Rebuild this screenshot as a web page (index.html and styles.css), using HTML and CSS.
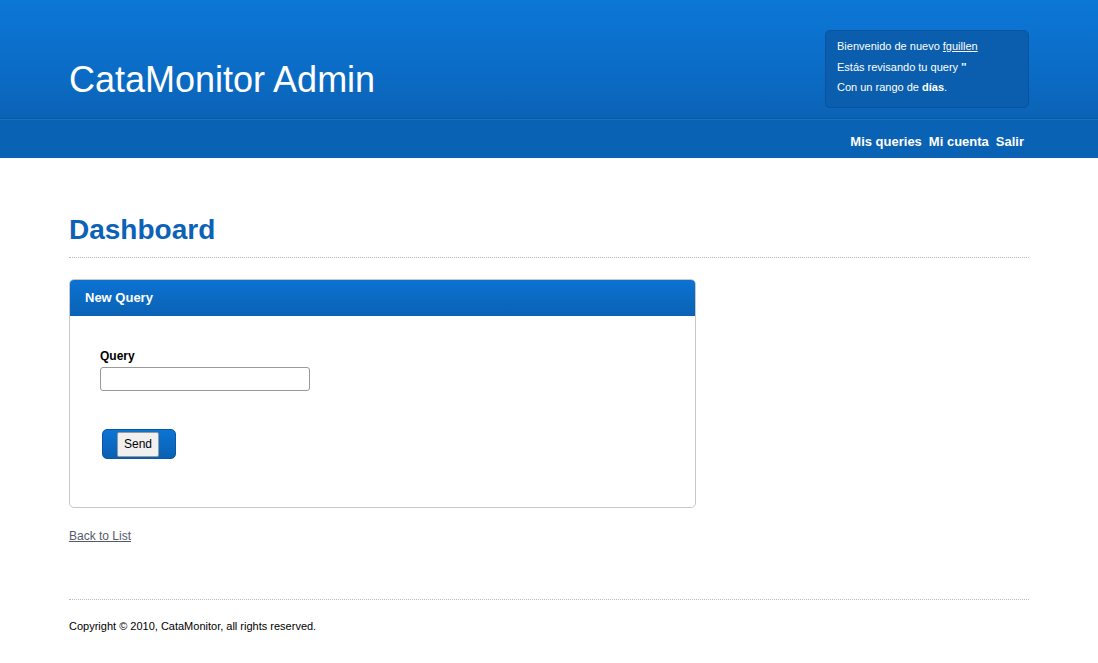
FILE: index.html
```html
<!DOCTYPE html>
<html lang="es">
<head>
<meta charset="utf-8">
<title>CataMonitor Admin</title>
<link rel="stylesheet" href="styles.css">
</head>
<body>
<div class="header">
  <div class="header-top">
    <div class="wrap header-inner">
      <h1 class="logo">CataMonitor Admin</h1>
      <div class="userbox">
        <p>Bienvenido de nuevo <a href="#">fguillen</a></p>
        <p>Estás revisando tu query <b>''</b></p>
        <p>Con un rango de <b>días</b>.</p>
      </div>
    </div>
  </div>
  <div class="nav">
    <div class="wrap nav-inner">
      <a href="#">Mis queries</a>
      <a href="#">Mi cuenta</a>
      <a href="#">Salir</a>
    </div>
  </div>
</div>

<div class="wrap main">
  <h2 class="page-title">Dashboard</h2>
  <div class="panel">
    <div class="panel-head">New Query</div>
    <div class="panel-body">
      <label class="field-label" for="q">Query</label>
      <input class="field-input" id="q" type="text">
      <div class="actions">
        <span class="btn-wrap"><button class="btn" type="button">Send</button></span>
      </div>
    </div>
  </div>
  <a class="back" href="#">Back to List</a>
  <div class="footer">Copyright © 2010, CataMonitor, all rights reserved.</div>
</div>
</body>
</html>
```
FILE: styles.css
```css
html, body {
  margin: 0;
  padding: 0;
  background: #fff;
  font-family: "Liberation Sans", Arial, Helvetica, sans-serif;
  color: #000;
}
.wrap {
  width: 960px;
  margin: 0 auto;
}
.header-top {
  height: 118px;
  background: linear-gradient(to bottom, #0c77d6 0%, #0b6cc6 60%, #0b63b5 100%);
  border-bottom: 1px solid #0a57a3;
  box-shadow: 0 1px 0 #1a72c4;
}
.header-inner {
  display: flex;
  justify-content: space-between;
  align-items: flex-start;
}
.logo {
  margin: 59px 0 0 0;
  font-size: 36px;
  font-weight: normal;
  color: #fff;
  line-height: 42px;
}
.userbox {
  margin-top: 30px;
  width: 180px;
  height: 61px;
  padding: 5px 11px 10px 11px;
  background: #0a5ead;
  border: 1px solid #0953a0;
  border-radius: 5px;
  color: #fff;
  font-size: 11px;
}
.userbox p {
  margin: 0;
  line-height: 20.5px;
}
.userbox a {
  color: #fff;
}
.nav {
  height: 38px;
  background: #0a62b4;
  margin-top: 1px;
}
.nav-inner {
  display: flex;
  justify-content: flex-end;
  align-items: center;
  height: 38px;
  gap: 7px;
  box-sizing: border-box;
  padding-right: 5px;
  padding-top: 4px;
}
.nav a {
  color: #fff;
  font-weight: bold;
  font-size: 13px;
  text-decoration: none;
}
.main {
  padding-top: 55px;
}
.page-title {
  margin: 0;
  font-size: 28px;
  font-weight: bold;
  color: #0b62b6;
  line-height: 34px;
  padding-bottom: 10px;
  border-bottom: 1px dotted #bbb;
}
.panel {
  margin-top: 21px;
  width: 625px;
  border: 1px solid #c8c8c8;
  border-radius: 5px;
  overflow: hidden;
}
.panel-head {
  height: 36px;
  line-height: 36px;
  padding-left: 15px;
  background: linear-gradient(to bottom, #0c72d2 0%, #0a62b4 100%);
  color: #fff;
  font-weight: bold;
  font-size: 13px;
}
.panel-body {
  padding: 32px 30px 48px 30px;
}
.field-label {
  display: block;
  font-weight: bold;
  font-size: 12px;
  line-height: 16px;
}
.field-input {
  display: block;
  margin-top: 3px;
  width: 210px;
  height: 24px;
  box-sizing: border-box;
  border: 1px solid #999;
  border-radius: 3px;
  padding: 2px 4px;
  font-size: 12px;
}
.actions {
  margin-top: 38px;
  padding-left: 2px;
}
.btn-wrap {
  display: inline-flex;
  align-items: center;
  height: 30px;
  box-sizing: border-box;
  padding: 0 16px 0 14px;
  background: linear-gradient(to bottom, #0c74d4 0%, #0a60b2 100%);
  border: 1px solid #0957a6;
  border-radius: 5px;
}
.btn {
  height: 25px;
  padding: 0 6px;
  background: #f0f0f0;
  border: 1px solid #999;
  border-radius: 2px;
  font-family: "Liberation Sans", Arial, sans-serif;
  font-size: 12px;
  color: #000;
}
.back {
  display: inline-block;
  margin-top: 21px;
  font-size: 12px;
  color: #555a6a;
}
.footer {
  margin-top: 55px;
  border-top: 1px dotted #bbb;
  padding-top: 20px;
  font-size: 11px;
  padding-bottom: 20px;
}
```
